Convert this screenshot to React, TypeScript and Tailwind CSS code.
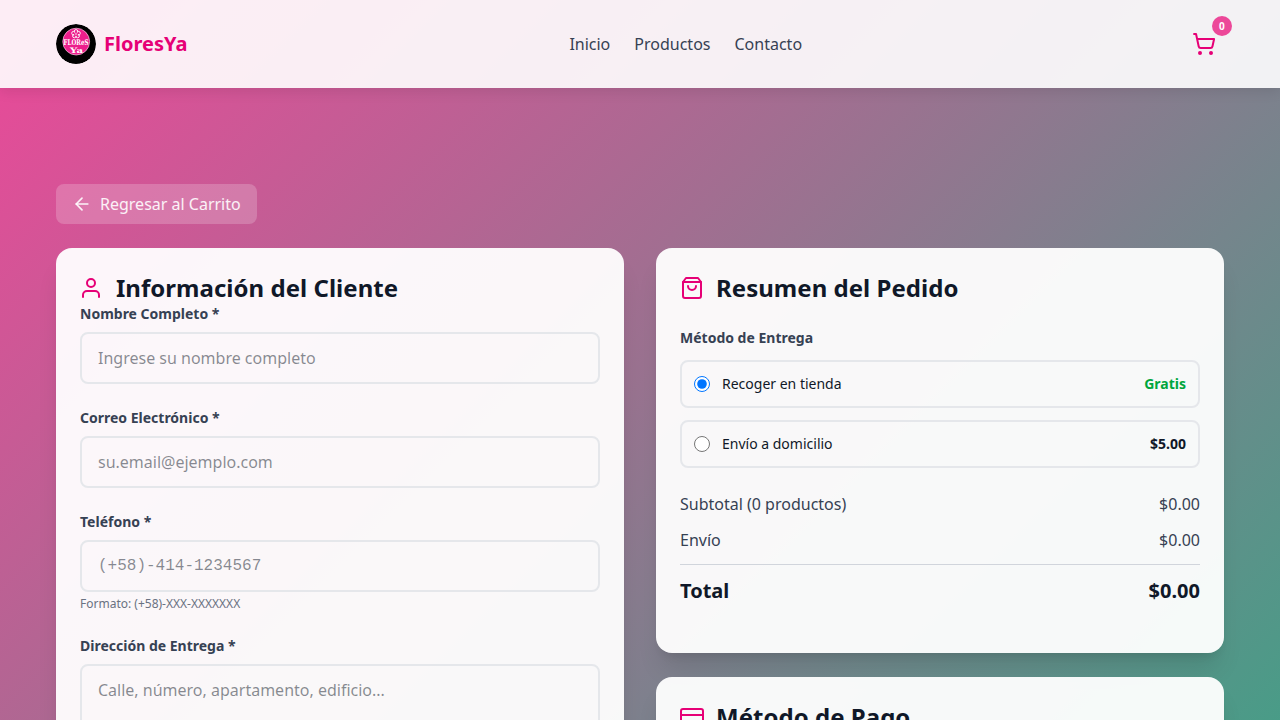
import React from "react";
import { ArrowLeft, ShoppingCart } from "lucide-react";
import { FiCreditCard, FiShoppingBag, FiUser } from "react-icons/fi";

const links = ["Inicio", "Productos", "Contacto"];

function Logo() {
  return (
    <svg viewBox="0 0 40 40" className="size-10 rounded-full" aria-label="FloresYa">
      <circle cx="20" cy="20" r="20" fill="#000" />
      <circle cx="20.2" cy="17.6" r="13.4" fill="#ec1e8c" stroke="#f9c9e2" strokeWidth="0.7" />
      <g fill="none" stroke="#fff" strokeWidth="0.9">
        <circle cx="20" cy="7.4" r="1.8" />
        <circle cx="22.5" cy="9.2" r="1.8" />
        <circle cx="21.6" cy="12" r="1.8" />
        <circle cx="18.4" cy="12" r="1.8" />
        <circle cx="17.5" cy="9.2" r="1.8" />
      </g>
      <circle cx="20" cy="10" r="2" fill="#ec1e8c" />
      <circle cx="20" cy="10" r="0.8" fill="#fff" />
      <g fill="#fff" fontFamily="DejaVu Serif, serif" fontWeight="700">
        <text x="7.6" y="21.2" fontSize="7.8" textLength="25" lengthAdjust="spacingAndGlyphs">
          FLOReS
        </text>
        <text x="14" y="28.6" fontSize="7.6" textLength="13" lengthAdjust="spacingAndGlyphs">
          Ya
        </text>
      </g>
    </svg>
  );
}

function Card({ children }: { children: React.ReactNode }) {
  return <section className="rounded-2xl bg-white/95 p-6 shadow-xl">{children}</section>;
}

function CardTitle({ icon, children }: { icon: React.ReactNode; children: React.ReactNode }) {
  return (
    <h2 className="flex items-center text-2xl leading-8 font-bold tracking-[0.03px] text-gray-900">
      {icon}
      {children}
    </h2>
  );
}

const fieldClass =
  "block w-full rounded-lg border-2 border-gray-200 px-4 py-3 text-base leading-normal text-gray-900 placeholder:text-gray-900/50";
const labelClass = "mb-2 block text-sm font-bold text-gray-700";

export default function App() {
  return (
    <div className="min-h-[1420px] bg-[linear-gradient(135deg,#ec4899_0%,#10b981_100%)] font-['Noto_Sans',sans-serif] text-gray-900">
      <header className="sticky top-0 z-10 h-22 bg-white/90 shadow-[0_4px_12px_rgba(0,0,0,0.09)]">
        <div className="mx-auto flex h-full max-w-[1200px] items-center justify-between px-4">
          <a className="flex items-center gap-2 text-xl font-bold text-[#e60076]">
            <Logo />
            FloresYa
          </a>
          <nav className="flex gap-6 text-base text-gray-700">
            {links.map((l) => (
              <a key={l}>{l}</a>
            ))}
          </nav>
          <button className="relative p-2 text-[#e60076]">
            <ShoppingCart size={24} />
            <span className="absolute -top-2 -right-2 flex size-5 items-center justify-center rounded-full bg-[#ec4899] text-[10px] font-bold text-white">
              0
            </span>
          </button>
        </div>
      </header>

      <main className="mx-auto max-w-[1200px] px-4 pt-24">
        <button className="mb-6 flex h-10 items-center gap-2 rounded-lg bg-white/20 px-4 text-base text-white/90">
          <ArrowLeft size={20} />
          Regresar al Carrito
        </button>

        <div className="grid grid-cols-2 items-start gap-8">
          <Card>
            <CardTitle icon={<FiUser size={24} className="mr-[13px] -ml-px text-[#e60076]" />}>
              Información del Cliente
            </CardTitle>
            <form className="space-y-6">
              <div>
                <label className={labelClass}>Nombre Completo *</label>
                <input className={fieldClass} placeholder="Ingrese su nombre completo" />
              </div>
              <div>
                <label className={labelClass}>Correo Electrónico *</label>
                <input className={fieldClass} placeholder="su.email@ejemplo.com" />
              </div>
              <div>
                <label className={labelClass}>Teléfono *</label>
                <input
                  className={`${fieldClass} h-13 font-['Liberation_Mono',monospace]`}
                  placeholder="(+58)-414-1234567"
                />
                <p className="mt-1 text-xs text-gray-500">Formato: (+58)-XXX-XXXXXXX</p>
              </div>
              <div>
                <label className={labelClass}>Dirección de Entrega *</label>
                <textarea className={fieldClass} rows={4} placeholder="Calle, número, apartamento, edificio..." />
              </div>
            </form>
          </Card>

          <div className="space-y-6">
            <Card>
              <CardTitle icon={<FiShoppingBag size={24} className="mr-3 text-[#e60076]" />}>
                Resumen del Pedido
              </CardTitle>
              <p className="mt-6 mb-3 text-sm font-bold text-gray-700">Método de Entrega</p>
              <div className="space-y-3 text-sm">
                <label className="flex h-12 items-center rounded-lg border-2 border-gray-200 px-3">
                  <input type="radio" name="delivery" defaultChecked className="mr-3 size-4" />
                  <span className="grow">Recoger en tienda</span>
                  <span className="font-bold text-[#00a63e]">Gratis</span>
                </label>
                <label className="flex h-12 items-center rounded-lg border-2 border-gray-200 px-3">
                  <input type="radio" name="delivery" className="mr-3 size-4" />
                  <span className="grow">Envío a domicilio</span>
                  <span className="font-bold">$5.00</span>
                </label>
              </div>
              <div className="mt-6 space-y-3 text-base text-gray-700">
                <div className="flex justify-between">
                  <span>Subtotal (0 productos)</span>
                  <span>$0.00</span>
                </div>
                <div className="flex justify-between">
                  <span>Envío</span>
                  <span>$0.00</span>
                </div>
                <div className="mb-6 flex justify-between border-t border-gray-300 pt-3 text-xl font-bold text-gray-900">
                  <span>Total</span>
                  <span>$0.00</span>
                </div>
              </div>
            </Card>
            <Card>
              <CardTitle icon={<FiCreditCard size={24} className="mr-3 text-[#e60076]" />}>Método de Pago</CardTitle>
              <div className="h-64" />
            </Card>
          </div>
        </div>
      </main>
    </div>
  );
}
